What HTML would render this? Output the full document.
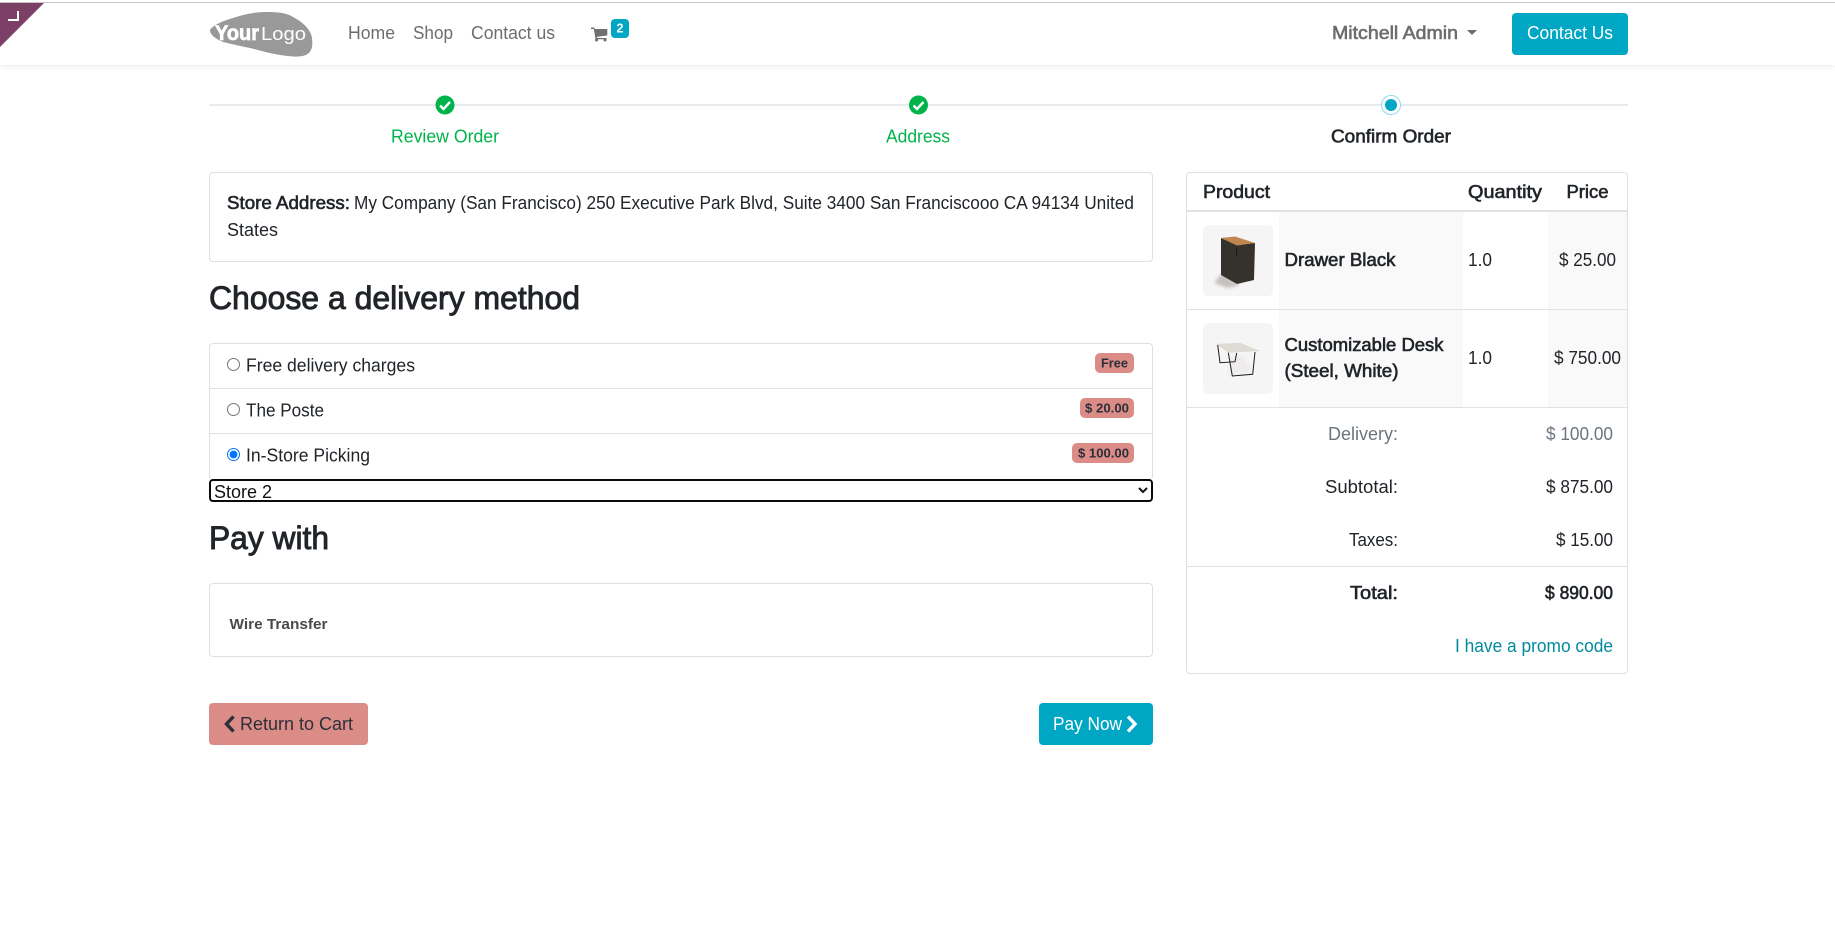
<!DOCTYPE html>
<html lang="en">
<head>
<meta charset="utf-8">
<title>Confirm Order</title>
<style>
html,body{margin:0;padding:0;background:#fff;width:1835px;height:951px;overflow:hidden}
body{position:relative;font-family:"Liberation Sans",sans-serif;color:#212529}
.a{position:absolute;box-sizing:border-box}
.box{border:1px solid #dfdfdf;border-radius:4px;background:#fff}
.nav{left:0;top:0;width:1835px;height:65px;background:#fff;box-shadow:0 2px 5px rgba(0,0,0,.07)}
.stripe{background:#f9f9fa}
.thumb{background:#f6f5f5;border-radius:5px}
.hr{background:#dfe3e8;height:1px}
.badge{background:#dc8c86;border-radius:5px;height:20px}
.btn{border-radius:4px;height:42px}
input[type=radio]{position:absolute;margin:0;width:13px;height:13px}
select{position:absolute;left:209px;top:479px;width:944px;height:23px;box-sizing:border-box;border:2px solid #0a0a0a;border-radius:4px;background:#fff;color:#111;font:18px "Liberation Sans",sans-serif;padding:0 0 2px 0;text-indent:-1px;margin:0;outline:0}
svg{position:absolute;left:0;top:0}
text{font-family:"Liberation Sans",sans-serif;font-size:18px;fill:#212529}
.m{stroke:#212529;stroke-width:.6}
.nv{fill:#6d6d6d}
.b{font-weight:700}
</style>
</head>
<body>
<div class="a nav"></div>
<div class="a" style="left:0;top:2px;width:1835px;height:1px;background:#c4c4c4"></div>

<div class="a box" style="left:209px;top:172px;width:944px;height:90px"></div>

<div class="a box" style="left:209px;top:343px;width:944px;height:137px;border-bottom:0"></div>
<div class="a hr" style="left:210px;top:388px;width:942px"></div>
<div class="a hr" style="left:210px;top:433px;width:942px"></div>
<input type="radio" name="d" style="left:227px;top:358px">
<input type="radio" name="d" style="left:227px;top:403px">
<input type="radio" name="d" style="left:227px;top:448px" checked>
<div class="a badge" style="left:1095px;top:353px;width:39px"></div>
<div class="a badge" style="left:1080px;top:398px;width:54px"></div>
<div class="a badge" style="left:1072px;top:443px;width:62px"></div>
<select><option>Store 2</option></select>

<div class="a box" style="left:209px;top:583px;width:944px;height:74px"></div>
<div class="a btn" style="left:209px;top:703px;width:159px;background:#dc8c86"></div>
<div class="a btn" style="left:1039px;top:703px;width:114px;background:#00a7c4"></div>

<div class="a box" style="left:1186px;top:172px;width:442px;height:502px"></div>
<div class="a" style="left:1187px;top:210px;width:440px;height:2px;background:#dee2e6"></div>
<div class="a stripe" style="left:1279px;top:212px;width:184px;height:97px"></div>
<div class="a stripe" style="left:1548px;top:212px;width:79px;height:97px"></div>
<div class="a stripe" style="left:1279px;top:310px;width:184px;height:97px"></div>
<div class="a stripe" style="left:1548px;top:310px;width:79px;height:97px"></div>
<div class="a hr" style="left:1187px;top:309px;width:440px"></div>
<div class="a hr" style="left:1187px;top:407px;width:440px"></div>
<div class="a hr" style="left:1187px;top:566px;width:440px"></div>
<div class="a thumb" style="left:1203px;top:225px;width:70px;height:71px"></div>
<div class="a thumb" style="left:1203px;top:323px;width:70px;height:71px"></div>
<div class="a btn" style="left:1512px;top:13px;width:116px;background:#00a7c4"></div>
<div class="a" style="left:611px;top:19px;width:18px;height:19px;background:#00a7c4;border-radius:4px"></div>
<div class="a" style="left:209px;top:104px;width:1419px;height:2px;background:#e9ecef"></div>

<svg width="1835" height="951" viewBox="0 0 1835 951" xmlns="http://www.w3.org/2000/svg">
  <defs>
    <filter id="s" x="-30%" y="-30%" width="160%" height="160%"><feGaussianBlur stdDeviation="1.500"/></filter>
    <filter id="t" x="-10%" y="-10%" width="120%" height="120%"><feGaussianBlur stdDeviation=".35"/></filter>
  </defs>

  <!-- corner ribbon -->
  <polygon points="0,3 44,3 0,47" fill="#7c3f66"/>
  <path d="M18 11v9H8" fill="none" stroke="#fff" stroke-width="2"/>

  <!-- logo -->
  <path d="M210 30C212 26 222 21 233 18C245 14 256 12 267 12C278 12 287 13 293 17C303 22 311 30 312 38C313 46 312 52 306 55C298 58 288 56 280 55C268 53 258 50 250 48C240 46 231 44 223 42C216 39 210 35 210 30Z" fill="#999"/>
  <text x="215" y="40" textLength="44" lengthAdjust="spacingAndGlyphs" class="b" style="fill:#fff;stroke:#fff;stroke-width:.7;font-size:21px">Your</text>
  <text x="261" y="40" textLength="45" lengthAdjust="spacingAndGlyphs" style="fill:#fff;font-size:18px">Logo</text>

  <!-- nav -->
  <text x="348" y="39" textLength="47" lengthAdjust="spacingAndGlyphs" class="nv">Home</text>
  <text x="413" y="39" textLength="40" lengthAdjust="spacingAndGlyphs" class="nv">Shop</text>
  <text x="471" y="39" textLength="84" lengthAdjust="spacingAndGlyphs" class="nv">Contact us</text>
  <path d="M591 27.500h3.200l.7 1.500h12.400v6.500l-10.300 1.300.3 1.200h9.300v1.300h-11L593.800 29H591z" fill="#707070"/>
  <circle cx="596.500" cy="40" r="1.500" fill="#707070"/><circle cx="605" cy="40" r="1.500" fill="#707070"/>
  <text x="620" y="32.500" text-anchor="middle" class="b" style="fill:#fff;font-size:12.500px">2</text>
  <text x="1332" y="39" textLength="126" lengthAdjust="spacingAndGlyphs" class="nv" style="stroke:#6d6d6d;stroke-width:.6">Mitchell Admin</text>
  <polygon points="1467,30 1477,30 1472,35" fill="#6d6d6d"/>
  <text x="1527" y="39" textLength="86" lengthAdjust="spacingAndGlyphs" style="fill:#fff">Contact Us</text>

  <!-- steps -->
  <circle cx="445" cy="105" r="9.500" fill="#00b44b"/>
  <path d="M440 105.500l3.500 3.500 6.500-7" fill="none" stroke="#fff" stroke-width="2.400"/>
  <circle cx="918.500" cy="105" r="9.500" fill="#00b44b"/>
  <path d="M913.500 105.500l3.500 3.500 6.500-7" fill="none" stroke="#fff" stroke-width="2.400"/>
  <circle cx="1391" cy="105" r="9.500" fill="#fff" stroke="#8adbe9" stroke-width="1"/>
  <circle cx="1391" cy="105" r="6" fill="#00a7c4"/>
  <text x="391" y="142.500" textLength="108" lengthAdjust="spacingAndGlyphs" style="fill:#00b44b">Review Order</text>
  <text x="886" y="142.500" textLength="64" lengthAdjust="spacingAndGlyphs" style="fill:#00b44b">Address</text>
  <text x="1331" y="142.500" textLength="120" lengthAdjust="spacingAndGlyphs" class="m">Confirm Order</text>

  <!-- address -->
  <text x="227" y="209" textLength="123" lengthAdjust="spacingAndGlyphs" class="m">Store Address:</text>
  <text x="354" y="209" textLength="780" lengthAdjust="spacingAndGlyphs">My Company (San Francisco) 250 Executive Park Blvd, Suite 3400 San Franciscooo CA 94134 United</text>
  <text x="227" y="236" textLength="51" lengthAdjust="spacingAndGlyphs">States</text>

  <!-- heading -->
  <text x="209" y="309" textLength="371" lengthAdjust="spacingAndGlyphs" class="m" style="font-size:32px;stroke-width:.9">Choose a delivery method</text>

  <!-- delivery -->
  <text x="246" y="371.500" textLength="169" lengthAdjust="spacingAndGlyphs">Free delivery charges</text>
  <text x="246" y="416.500" textLength="78" lengthAdjust="spacingAndGlyphs">The Poste</text>
  <text x="246" y="461.500" textLength="124" lengthAdjust="spacingAndGlyphs">In-Store Picking</text>
  <text x="1101" y="367.500" textLength="27" lengthAdjust="spacingAndGlyphs" class="b" style="font-size:13px;fill:#2b2f3a">Free</text>
  <text x="1085" y="412.500" textLength="44" lengthAdjust="spacingAndGlyphs" class="b" style="font-size:13px;fill:#2b2f3a">$ 20.00</text>
  <text x="1078" y="457.500" textLength="51" lengthAdjust="spacingAndGlyphs" class="b" style="font-size:13px;fill:#2b2f3a">$ 100.00</text>

  <!-- pay with -->
  <text x="209" y="549" textLength="120" lengthAdjust="spacingAndGlyphs" class="m" style="font-size:32px;stroke-width:.9">Pay with</text>
  <text x="229.500" y="629" textLength="98" lengthAdjust="spacingAndGlyphs" class="b" style="font-size:15px;fill:#4a4a4a">Wire Transfer</text>

  <!-- buttons -->
  <path d="M233.500 716.500l-7 7.500 7 7.500" fill="none" stroke="#2b2f3a" stroke-width="3.400"/>
  <text x="240" y="730" textLength="113" lengthAdjust="spacingAndGlyphs" style="fill:#2b2f3a">Return to Cart</text>
  <text x="1053" y="730" textLength="69" lengthAdjust="spacingAndGlyphs" style="fill:#fff">Pay Now</text>
  <path d="M1128 716.500l7 7.500-7 7.500" fill="none" stroke="#fff" stroke-width="3.400"/>

  <!-- table head -->
  <text x="1203" y="198" textLength="67" lengthAdjust="spacingAndGlyphs" class="m">Product</text>
  <text x="1468" y="198" textLength="74" lengthAdjust="spacingAndGlyphs" class="m">Quantity</text>
  <text x="1566.500" y="198" textLength="42" lengthAdjust="spacingAndGlyphs" class="m">Price</text>

  <!-- drawer image -->
  <polygon points="1214,283 1222,273 1240,285 1228,288" fill="#c4c2c0" filter="url(#s)"/>
  <g filter="url(#t)">
    <polygon points="1221,238 1221,275 1237,284 1254,280 1255,243 1237,245" fill="#35312e"/>
    <polygon points="1221,238 1235,236.500 1255,243 1237,245.500" fill="#c08650"/>
    <path d="M1236.500 247v10" stroke="#191715" stroke-width=".8" fill="none"/>
  </g>

  <!-- desk image -->
  <polygon points="1228,375 1252,372 1244,356 1230,358" fill="#eeecec" filter="url(#s)"/>
  <g filter="url(#t)">
    <polygon points="1216,344 1240,342.700 1260,351 1228.300,352.700" fill="#dedbd4"/>
    <path d="M1217.700 345l2.300 17.700 15-1 1.700-8.700 M1228.300 352.700l4 23.300 20.400-1.700 2.300-22.300" fill="none" stroke="#1d1d1d" stroke-width="1"/>
  </g>

  <text x="1284.500" y="266" textLength="111" lengthAdjust="spacingAndGlyphs" class="m">Drawer Black</text>
  <text x="1468" y="266" textLength="24" lengthAdjust="spacingAndGlyphs">1.0</text>
  <text x="1559" y="266" textLength="57" lengthAdjust="spacingAndGlyphs">$ 25.00</text>
  <text x="1284.500" y="351" textLength="159" lengthAdjust="spacingAndGlyphs" class="m">Customizable Desk</text>
  <text x="1284.500" y="377" textLength="114" lengthAdjust="spacingAndGlyphs" class="m">(Steel, White)</text>
  <text x="1468" y="364" textLength="24" lengthAdjust="spacingAndGlyphs">1.0</text>
  <text x="1554" y="364" textLength="67" lengthAdjust="spacingAndGlyphs">$ 750.00</text>

  <!-- summary -->
  <text x="1328" y="440" textLength="70" lengthAdjust="spacingAndGlyphs" style="fill:#6c757d">Delivery:</text>
  <text x="1546" y="440" textLength="67" lengthAdjust="spacingAndGlyphs" style="fill:#6c757d">$ 100.00</text>
  <text x="1325" y="493" textLength="73" lengthAdjust="spacingAndGlyphs">Subtotal:</text>
  <text x="1546" y="493" textLength="67" lengthAdjust="spacingAndGlyphs">$ 875.00</text>
  <text x="1349" y="546" textLength="49" lengthAdjust="spacingAndGlyphs">Taxes:</text>
  <text x="1556" y="546" textLength="57" lengthAdjust="spacingAndGlyphs">$ 15.00</text>
  <text x="1350" y="599" textLength="48" lengthAdjust="spacingAndGlyphs" class="m">Total:</text>
  <text x="1545" y="599" textLength="68" lengthAdjust="spacingAndGlyphs" class="m">$ 890.00</text>
  <text x="1455" y="652" textLength="158" lengthAdjust="spacingAndGlyphs" style="fill:#008a9e">I have a promo code</text>
</svg>
</body>
</html>
